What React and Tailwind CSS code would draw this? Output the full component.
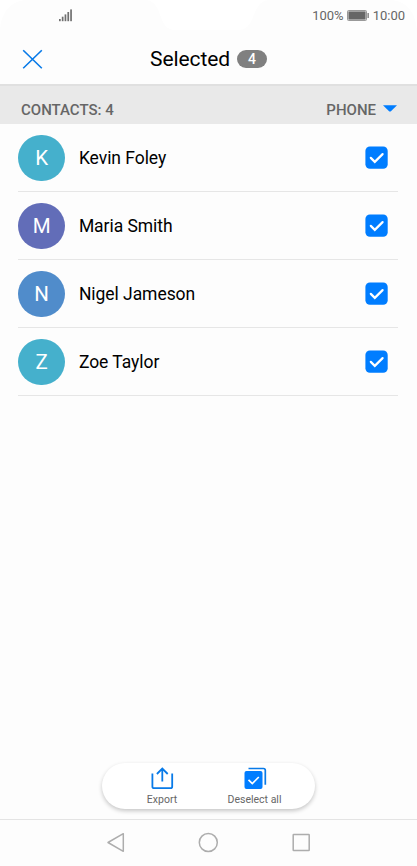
import React from "react";

const contacts = [
  { id: 1, name: "Kevin Foley", color: "bg-[#45b0cc]" },
  { id: 2, name: "Maria Smith", color: "bg-[#626db8]" },
  { id: 3, name: "Nigel Jameson", color: "bg-[#508ccb]" },
  { id: 4, name: "Zoe Taylor", color: "bg-[#45b0cc]" },
];

const StatusBar = () => {
  return (
    <div className="relative flex h-[31px] shrink-0 justify-between pl-[59px] pr-3 text-[#666]">
      {/* screen corners and notch */}
      <svg
        className="absolute left-0 top-0"
        width="417"
        height="31"
        viewBox="0 0 417 31"
        fill="#fff"
      >
        <path d="M0 0H26C10 1 1 13 0 31Z" />
        <path d="M417 0H391C407 1 416 13 417 31Z" />
        <path d="M147 0C164 3 157 30 175 30H238C257 30 250 3 268 0Z" />
      </svg>
      <svg
        className="relative mt-[9px]"
        width="14"
        height="13"
        viewBox="0 0 14 13"
        fill="#707070"
      >
        <rect x="0" y="10" width="1.7" height="2.2" />
        <rect x="2.8" y="7.7" width="1.7" height="4.5" />
        <rect x="5.6" y="5.4" width="1.7" height="6.8" />
        <rect x="8.4" y="3" width="1.7" height="9.2" />
        <rect x="11.2" y="0.4" width="1.7" height="11.8" />
      </svg>
      <div className="relative flex h-8 items-center text-[13px]">
        <span>100%</span>
        <svg className="-mt-px ml-[3.5px]" width="22" height="11" viewBox="0 0 22 11">
          <rect
            x="0.5"
            y="0.5"
            width="19"
            height="10"
            rx="1"
            fill="#dcdcdc"
            stroke="#999"
          />
          <rect x="1.5" y="1.5" width="17" height="8" fill="#666" />
          <rect x="20.5" y="3" width="1.3" height="5" fill="#777" />
        </svg>
        <span className="ml-[3.5px]">10:00</span>
      </div>
    </div>
  );
};

const Checkbox = () => {
  return (
    <svg width="23" height="23" viewBox="0 0 23 23" fill="none">
      <rect x="0.4" y="0.4" width="22.3" height="22.3" rx="4.5" fill="#007dff" />
      <path
        d="M5.8 11.9L9.8 15.9L17.6 8.1"
        stroke="#fff"
        strokeWidth="2.2"
        strokeLinecap="round"
      />
    </svg>
  );
};

const ContactRow = ({ contact }) => {
  return (
    <div className="flex h-[68px] items-center border-b border-[#e6e6e6] pt-px">
      <div
        className={`ml-[0.4px] flex size-[46.5px] items-center justify-center rounded-full pt-px text-[20.5px] text-white ${contact.color}`}
      >
        {contact.name[0]}
      </div>
      <p className="ml-[14px] flex-1 pt-px text-[17.5px] tracking-[-0.05px] text-black">
        {contact.name}
      </p>
      <div className="mr-2.5 pb-0.5">
        <Checkbox />
      </div>
    </div>
  );
};

const ActionBar = () => {
  return (
    <div className="ml-[102px] flex h-[46px] w-[213px] rounded-full bg-white px-[14px] text-[10.5px] leading-3 text-[#666] shadow-[0_2px_4px_rgba(0,0,0,0.22)]">
      <button className="flex w-[92px] flex-col items-center pt-1">
        <svg width="23" height="23" viewBox="0 0 23 23" fill="none">
          <path
            d="M1.4 6.6V19.4Q1.4 21.2 3.2 21.2H19.4Q21.2 21.2 21.2 19.4V6.6M11.3 14.5V2M5.9 7L11.3 1.6L16.7 7"
            stroke="#087ae8"
            strokeWidth="1.8"
          />
        </svg>
        <span className="mt-1">Export</span>
      </button>
      <button className="flex w-[93px] flex-col items-center pt-1">
        <svg className="ml-0.5" width="23" height="23" viewBox="0 0 23 23" fill="none">
          <path
            d="M4.5 1.5H19.5Q21.3 1.5 21.3 3.3V17.8"
            stroke="#087ae8"
            strokeWidth="1.7"
          />
          <rect x="0.5" y="4" width="18" height="18" rx="2" fill="#007dff" />
          <path d="M4.5 12.8L8.3 16.6L14.8 10" stroke="#fff" strokeWidth="1.7" />
        </svg>
        <span className="mt-1">Deselect all</span>
      </button>
    </div>
  );
};

const NavBar = () => {
  return (
    <svg
      width="417"
      height="46"
      viewBox="0 0 417 46"
      fill="none"
      stroke="#adadad"
      strokeWidth="1.5"
      strokeLinejoin="round"
    >
      <path d="M108 22.5L123.3 13.7V31.3Z" />
      <circle cx="208.3" cy="22.5" r="9" />
      <rect x="293.2" y="14.4" width="16" height="16" rx="0.5" />
    </svg>
  );
};

const App = () => {
  return (
    <div className="flex h-[866px] w-[417px] flex-col overflow-hidden bg-[#fdfdfd] font-['Roboto',sans-serif]">
      <StatusBar />

      {/* header */}
      <div className="flex h-[53px] shrink-0 items-center pb-px pl-[22px] pt-1">
        <svg
          width="21"
          height="21"
          viewBox="0 0 21 21"
          fill="none"
          stroke="#087ae8"
          strokeWidth="1.6"
        >
          <path d="M1.2 1.2L19.8 19.2M19.8 1.2L1.2 19.2" />
        </svg>
        <h1 className="ml-[107px] w-[80px] pt-0.5 text-[21px] tracking-[-0.08px] text-black">
          Selected
        </h1>
        <span className="ml-[7px] flex h-[18px] w-[30px] items-center justify-center rounded-full bg-[#808080] text-[14px] font-medium text-white">
          4
        </span>
      </div>

      {/* list title */}
      <div className="flex h-10 shrink-0 items-center justify-between border-t-2 border-[#e0e0e0] bg-[#e9e9e9] pl-[21px] pr-5 pt-2.5 text-[15px] font-medium text-[#666]">
        <span>CONTACTS: 4</span>
        <div className="flex items-center">
          <span>PHONE</span>
          <svg className="-mt-[3px] ml-[7px]" width="14" height="7" viewBox="0 0 14 7">
            <path d="M0 0.3H14L8.2 5.9Q7 6.9 5.8 5.9Z" fill="#007dff" />
          </svg>
        </div>
      </div>

      {/* contacts */}
      <div className="flex-1 pl-[18px] pr-[19px]">
        {contacts.map((contact) => (
          <ContactRow key={contact.id} contact={contact} />
        ))}
      </div>

      <ActionBar />
      <div className="mt-[10px] h-[47px] shrink-0 border-t border-[#e4e4e4]">
        <NavBar />
      </div>
    </div>
  );
};

export default App;
